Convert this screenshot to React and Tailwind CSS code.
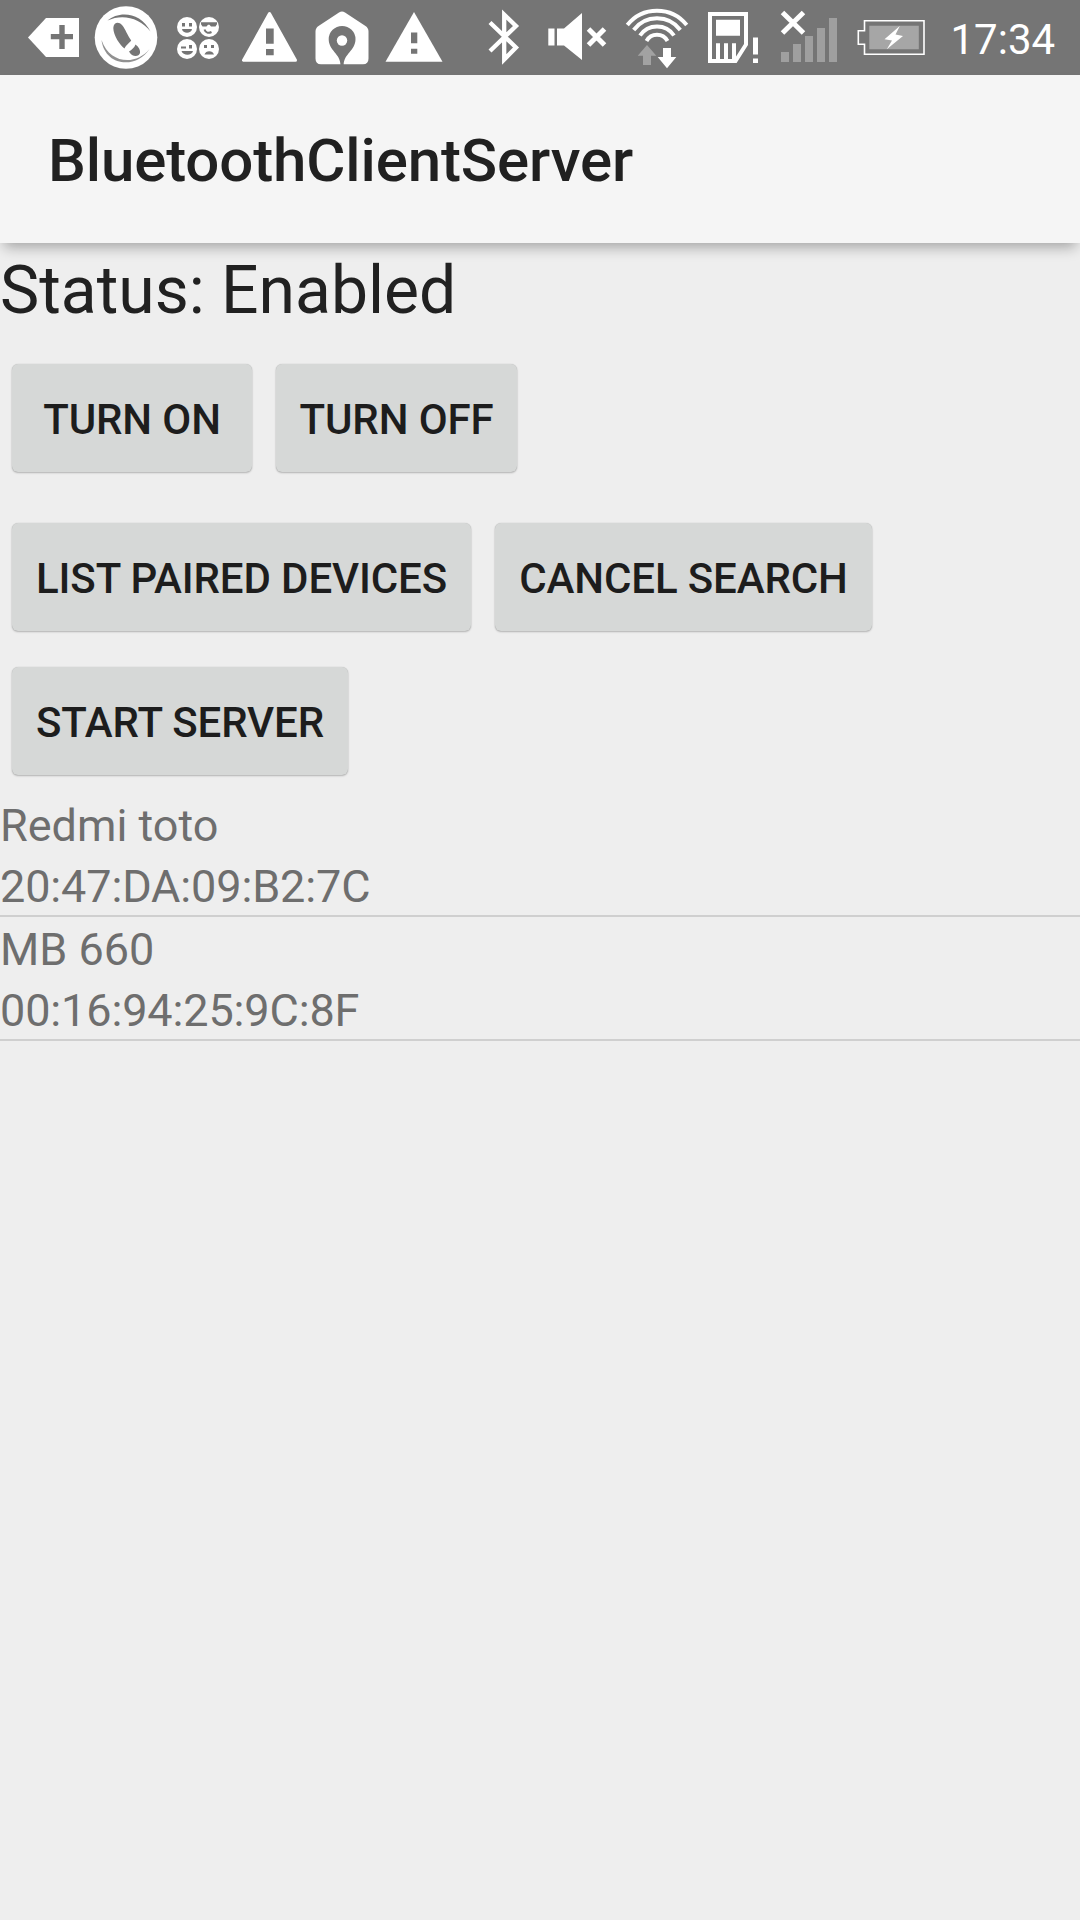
import React from "react";

// Every status icon is drawn in status-bar coordinates: `x` is its left edge, `w` its width.
function StatusIcon({ x, w, children }) {
  return (
    <svg width={w} height="75" viewBox={`${x} 0 ${w} 75`} className="block shrink-0" fill="#fff">
      {children}
    </svg>
  );
}

const BG = "#757575";

function StatusBar() {
  return (
    <header className="flex h-[75px] w-full items-center bg-[#757575] pl-6">
      <StatusIcon x={24} w={64}>
        <path d="M28 37.5 46 18H79V57H46Z" />
        <path d="M59.3 25h5.4v9H73v5.3h-8.3v9.7h-5.4v-9.700h-8.500V34h8.5Z" fill={BG} />
      </StatusIcon>
      <StatusIcon x={88} w={80}>
        <circle cx="126" cy="37.500" r="31.300" />
        <path d="M107.500 20.500C119 10.500 141 12 150.500 31.500C140 17.500 122 13.500 107.500 20.500Z" fill={BG} />
        <path d="M101.500 40C105 67 137 69 149.500 49C137 65 110 65 101.500 40Z" fill={BG} opacity="0.8" />
        <path d="M113.300 28C113.500 22.500 118.500 21 122 25C126 30 127 34.500 131.200 40.500C130 42.500 126.500 44.300 124.500 48.500C120 45 113.500 36 113.300 28Z" fill={BG} />
        <path d="M129 51.500C131.500 50 134.500 47.500 135.500 44.500C139 47 140.500 50.500 140 53C139 57 132 57.500 129 51.500Z" fill={BG} />
      </StatusIcon>
      <StatusIcon x={168} w={66}>
        <circle cx="187" cy="27" r="10" />
        <circle cx="209" cy="27" r="10" />
        <circle cx="187" cy="49" r="10" />
        <circle cx="209" cy="49" r="10" />
        <g fill={BG}>
          <path d="M182 23h3v3.500h-3zM189 23h3v3.500h-3zM182 29h10c-.5 5-9.500 5-10 0Z" />
          <path d="M201 22.300h16v2l-1.500 2.200h-4.500l-1.500-1.700h-1.500l-1.500 1.700h-4l-1.500-2.200Z" />
          <path d="M204.500 29.500c1 3.500 4 4 7 2.500" fill="none" stroke={BG} strokeWidth="2" />
          <path d="M181 46.500h5v2h-5zM189 45h3v3.500h-3zM181.500 51h11.500c-1 5-10 5-11.500 0Z" />
          <path d="M204 45h3v3h-3zM211 45h3v3h-3zM204.500 54.500c1-4.500 8.500-4.500 9.500 0Z" />
        </g>
      </StatusIcon>
      <StatusIcon x={234} w={74}>
        <path d="M269.500 13.500 243.500 60.200H295.500Z" stroke="#fff" strokeWidth="3" strokeLinejoin="round" />
        <path d="M266 28.500h7.700v15.200H266zM266 49h7.700v6.300H266z" fill={BG} />
      </StatusIcon>
      <StatusIcon x={308} w={70}>
        <path d="M339 12.500Q342 10.500 345 12.500L365.500 26Q368.500 28 368.500 31.500V58.500Q368.500 64.300 363 64.300H321Q315.500 64.300 315.500 58.500V31.500Q315.500 28 318.500 26Z" />
        <path d="M340.500 65C340.500 54 328.700 50.500 328.700 39.300A13.400 13.400 0 0 1 355.500 39.300C355.500 50.500 343.700 54 343.700 65Z" fill={BG} />
        <circle cx="342" cy="40.500" r="5.200" />
      </StatusIcon>
      <StatusIcon x={378} w={100}>
        <path d="M414 12 385.500 61.800H442.500Z" />
        <path d="M411 32.500h6.300v10.700H411zM411 48.700h6.300v5H411z" fill={BG} />
      </StatusIcon>
      <StatusIcon x={478} w={60}>
        <path d="M490 22.500 516 47.500 504.200 59.500V14.500L516 26 490 51" fill="none" stroke="#fff" strokeWidth="4.300" />
      </StatusIcon>
      <StatusIcon x={538} w={80}>
        <path d="M548.300 28.500h6.200v17h-6.200zM557 28.500h7L582 13V60L564 45.500h-7z" />
        <path d="M588.500 29 604.500 45M604.500 29 588.500 45" stroke="#fff" strokeWidth="5" />
      </StatusIcon>
      <StatusIcon x={618} w={80}>
        <g fill="none" stroke="#fff" strokeWidth="3.900">
          <path d="M627.300 25A38 38 0 0 1 686.700 25" />
          <path d="M633.700 30A29 29 0 0 1 680.300 30" />
          <path d="M640 35.500A20.500 20.500 0 0 1 674 35.500" />
          <path d="M646.500 41A12 12 0 0 1 667.500 41" />
        </g>
        <path d="M647 45 656.300 55.700H651V65h-8v-9.300h-5.300Z" fill="#a2a2a2" />
        <path d="M663 48h8v9h5.300L667 68.200 657.700 57H663Z" />
      </StatusIcon>
      <StatusIcon x={698} w={72}>
        <path d="M710 14H746V44.500L735.500 61H710Z" fill="none" stroke="#fff" strokeWidth="4" />
        <path d="M716 19.700h24v16h-24zM716 43.300h4V61h-4zM724 43.300h4V61h-4zM732 43.300h4V61h-4z" />
        <path d="M753 37.500h5v17h-5zM753 58.500h5V63h-5z" />
      </StatusIcon>
      <StatusIcon x={770} w={76}>
        <path d="M781 52h8v10h-8zM793 44h8v18h-8zM805 36h8v26h-8zM817 28h8v34h-8zM829 18h8v44h-8z" fill="#9f9f9f" />
        <path d="M782.500 12.500 803.500 33M803.500 12.500 782.500 33" stroke="#fff" strokeWidth="5" />
      </StatusIcon>
      <StatusIcon x={846} w={86}>
        <path d="M864.500 20.700H924V54.300H864.500V44.300H858.300V30.700H864.500Z" fill="none" stroke="#fff" strokeWidth="1.600" />
        <path d="M869.300 25.700h49.500v23.600h-49.500z" fill="#a6a6a6" />
        <path d="M899.800 26 884.500 39.300 892 40.500 886.800 49.300 903 36 895.500 34.500Z" />
      </StatusIcon>
      <span className="ml-[18.500px] pt-[4px] text-[42px] leading-none text-white">17:34</span>
    </header>
  );
}

function Button({ className, children }) {
  return (
    <button
      className={`flex h-[108px] shrink-0 items-center justify-center whitespace-nowrap rounded-[6px] bg-[#d6d8d7] pt-[4px] text-[42px] font-medium leading-none tracking-[-0.12px] text-[#1d1d1d] shadow-[0_0_1px_rgba(0,0,0,0.2),0_1px_2px_rgba(0,0,0,0.24)] ${className}`}
    >
      {children}
    </button>
  );
}

const devices = [
  { name: "Redmi toto", address: "20:47:DA:09:B2:7C" },
  { name: "MB 660", address: "00:16:94:25:9C:8F" },
];

export default function App() {
  return (
    <div className="h-[1920px] w-[1080px] overflow-hidden bg-[#eeeeee] font-['Roboto',sans-serif] text-[#212121]">
      <StatusBar />
      <div className="relative flex h-[168px] items-center bg-[#f5f5f5] pl-12 pt-[4px] shadow-[0_8px_13px_-4px_rgba(0,0,0,0.32)]">
        <h1 className="text-[60px] font-medium leading-[70px] tracking-[-0.12px]">BluetoothClientServer</h1>
      </div>
      <main>
        <p className="h-[109px] pt-[9px] text-[66px] leading-[78px]">Status: Enabled</p>
        <div className="flex gap-6 px-3 pt-3">
          <Button className="w-[240px]">TURN ON</Button>
          <Button className="w-[241px]">TURN OFF</Button>
        </div>
        <div className="mt-[51px] flex gap-6 px-3">
          <Button className="w-[459px]">LIST PAIRED DEVICES</Button>
          <Button className="w-[377px]">CANCEL SEARCH</Button>
        </div>
        <div className="mt-9 flex px-3">
          <Button className="w-[336px]">START SERVER</Button>
        </div>
        <ul className="mt-[18px] text-[45px] leading-[61px] text-[#6e6e6e]">
          {devices.map((d) => (
            <li key={d.address} className="h-[124px] border-b-2 border-[#cfcfcf] pt-[2px]">
              <div>{d.name}</div>
              <div className="tracking-[-0.13px]">{d.address}</div>
            </li>
          ))}
        </ul>
      </main>
    </div>
  );
}
